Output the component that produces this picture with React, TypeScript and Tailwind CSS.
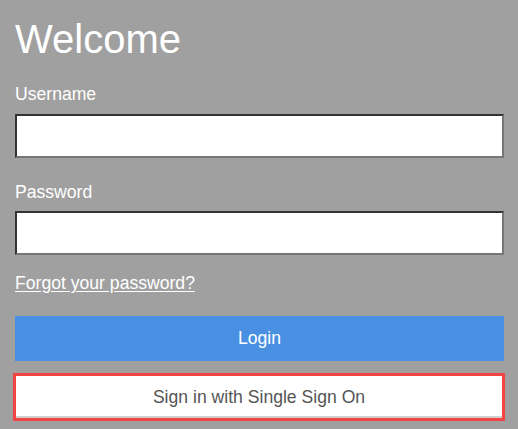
import { useState } from 'react';

export default function App() {
  const [username, setUsername] = useState('');
  const [password, setPassword] = useState('');

  const inputClass =
    'block w-[489px] h-[44px] bg-white border-2 border-t-[#333] border-l-[#333] border-b-[#767676] border-r-[#767676] px-2 text-[17.6px] text-[#333] outline-none';

  return (
    <div
      className="min-h-[429px] w-[518px] bg-[#a0a0a0] pl-[15px] pt-[15px]"
      style={{ fontFamily: '"Liberation Sans", Arial, sans-serif' }}
    >
      <h1 className="text-[40px] leading-[48px] text-white">Welcome</h1>

      <form
        onSubmit={(e) => {
          e.preventDefault();
        }}
      >
        <label htmlFor="username" className="mt-[21px] block text-[17.6px] leading-[20px] text-white">
          Username
        </label>
        <input
          id="username"
          type="text"
          value={username}
          onChange={(e) => setUsername(e.target.value)}
          className={`mt-[10px] ${inputClass}`}
        />

        <label htmlFor="password" className="mt-[24px] block text-[17.6px] leading-[20px] text-white">
          Password
        </label>
        <input
          id="password"
          type="password"
          value={password}
          onChange={(e) => setPassword(e.target.value)}
          className={`mt-[9px] ${inputClass}`}
        />

        <a
          href="#"
          className="mt-[18px] block w-fit text-[17.6px] leading-[20px] text-white underline underline-offset-2"
        >
          Forgot your password?
        </a>

        <button
          type="submit"
          className="mt-[23px] block h-[45px] w-[489px] bg-[#4a90e2] text-[17.6px] text-white"
        >
          Login
        </button>

        <button
          type="button"
          className="-ml-[2px] mt-[12px] block h-[48px] w-[492px] border-[3px] border-[#f44343] bg-white text-[17.6px] text-[#555] shadow-[inset_0_-2px_0_#cfcfcf]"
        >
          Sign in with Single Sign On
        </button>
      </form>
    </div>
  );
}
